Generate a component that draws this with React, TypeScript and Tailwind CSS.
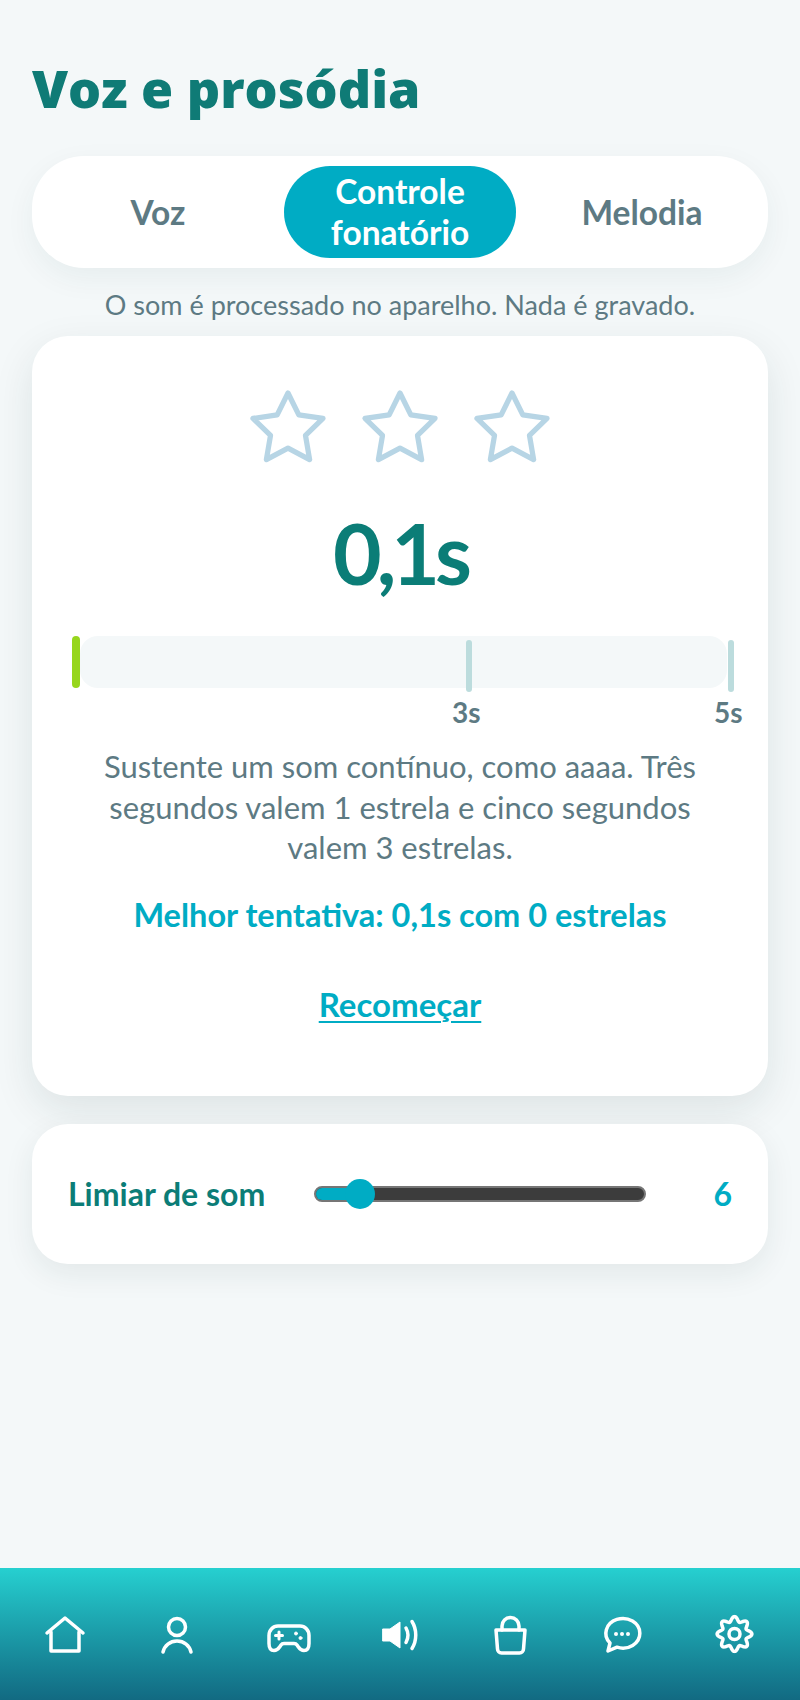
import React from 'react';

const tabs = ['Voz', 'Controle fonatório', 'Melodia'];

// wavy outline for the settings gear, 8 lobes
const gearPath = (() => {
  const pts: string[] = [];
  for (let i = 0; i < 160; i++) {
    const t = (i / 160) * Math.PI * 2;
    const r = 15 + 2.4 * Math.cos(8 * t);
    pts.push(`${(23.5 + r * Math.sin(t)).toFixed(2)} ${(24 - r * Math.cos(t)).toFixed(2)}`);
  }
  return `M${pts.join('L')}z`;
})();

function StarIcon() {
  return (
    <svg width="84" height="84" viewBox="0 0 24 24" fill="none" stroke="#b7d5e5" strokeWidth="1.5" strokeLinejoin="round">
      <path d="M12 2l3.09 6.26L22 9.27l-5 4.87 1.18 6.88L12 17.77l-6.18 3.25L7 14.14 2 9.27l6.91-1.01L12 2z" />
    </svg>
  );
}

function NavIcon({ children }: { children: React.ReactNode }) {
  return (
    <svg width="48" height="48" viewBox="0 0 48 48" fill="none" stroke="white" strokeWidth="3.5" strokeLinecap="round" strokeLinejoin="round">
      {children}
    </svg>
  );
}

export default function App() {
  return (
    <div className="flex min-h-[1700px] flex-col bg-[#f4f8f9] font-['Lato',sans-serif]">
      <div className="flex flex-col px-8 pt-[58px]">
        <h1 className="font-['Open_Sans',sans-serif] text-[52px] leading-[60px] font-extrabold text-[#0f7b76]">Voz e prosódia</h1>

        <div className="mt-[38px] grid h-[112px] grid-cols-3 gap-[10px] rounded-[52px] bg-white p-[10px] shadow-[0_10px_30px_rgba(0,60,70,0.06)]">
          {tabs.map((tab) => (
            <div
              key={tab}
              className={
                tab === 'Controle fonatório'
                  ? 'flex items-center justify-center rounded-[46px] bg-[#00acc4] px-6 text-center text-[33.5px] leading-[41px] font-bold text-white'
                  : 'flex items-center justify-center text-center text-[33.5px] leading-[41px] font-bold text-[#5d7a83]'
              }
            >
              {tab}
            </div>
          ))}
        </div>

        <p className="mt-5 text-center text-[27px] leading-[34px] text-[#5d7a83]">O som é processado no aparelho. Nada é gravado.</p>

        <div className="mt-[14px] flex h-[760px] flex-col items-center rounded-[36px] bg-white px-9 pt-[50px] shadow-[0_14px_40px_rgba(20,50,50,0.1)]">
          <div className="flex gap-7">
            <StarIcon />
            <StarIcon />
            <StarIcon />
          </div>

          <div className="mt-[33px] text-[84px] leading-[100px] font-bold tracking-[-5px] text-[#0b7d77]">0,1s</div>

          <div className="relative mt-[33px] ml-[12px] h-[52px] w-[647px] self-start rounded-[18px] bg-[#f4f8f9]">
            <div className="absolute top-0 -left-2 h-[52px] w-2 rounded-full bg-[#97d61d]" />
            <div className="absolute top-1 left-[386px] h-[52px] w-[6px] rounded-full bg-[#bcdcdd]" />
            <div className="absolute top-1 left-[648px] h-[52px] w-[6px] rounded-full bg-[#bcdcdd]" />
            <span className="absolute top-[60px] left-[372px] text-[28px] leading-[32px] font-bold text-[#5d7a83]">3s</span>
            <span className="absolute top-[60px] left-[634px] text-[28px] leading-[32px] font-bold text-[#5d7a83]">5s</span>
          </div>

          <p className="mt-[58px] max-w-[620px] text-center text-[31px] leading-[40.5px] text-[#5d7a83]">
            Sustente um som contínuo, como aaaa. Três segundos valem 1 estrela e cinco segundos valem 3 estrelas.
          </p>

          <p className="mt-[27px] text-center text-[32.5px] leading-[40px] font-bold text-[#00acc4]">Melhor tentativa: 0,1s com 0 estrelas</p>

          <a className="mt-[49px] text-[33px] leading-[40px] font-bold text-[#00acc4] underline decoration-2 underline-offset-4">Recomeçar</a>
        </div>

        <div className="mt-7 flex h-[140px] items-center rounded-[36px] bg-white pr-9 pl-9 shadow-[0_10px_30px_rgba(20,50,50,0.08)]">
          <span className="w-[246px] text-[32px] font-bold text-[#0b7d77]">Limiar de som</span>
          <div className="relative h-4 w-[332px] rounded-full border-2 border-[#767676] bg-[#3c3c3c]">
            <div className="absolute top-0 left-0 h-full w-[46px] rounded-l-full bg-[#00acc4]" />
            <div className="absolute top-[-9px] left-[29px] h-[30px] w-[30px] rounded-full bg-[#00acc4]" />
          </div>
          <span className="ml-auto text-[32px] font-bold text-[#00acc4]">6</span>
        </div>
      </div>

      <nav className="mt-auto flex h-[132px] items-start justify-between bg-gradient-to-b from-[#26d0d0] to-[#126a82] px-[41px] pt-[42px]">
        <NavIcon>
          <path d="M6 23L24 8l18 15" />
          <path d="M10 22v19h28V22" />
        </NavIcon>
        <NavIcon>
          <circle cx="24" cy="17" r="8.500" />
          <path d="M10 42c1.500-6.500 7-11 14-11s12.500 4.500 14 11" />
        </NavIcon>
        <NavIcon>
          <path d="M14 16h22c5 0 9 4 9 9.500v8c0 5-2 7-5 7-2.500 0-4-1-6-4l-1-1.500c-.8-1.200-1.500-1.500-3-1.500H20c-1.500 0-2.200.3-3 1.500l-1 1.500c-2 3-3.500 4-6 4-3 0-5-2-5-7v-8c0-5.500 4-9.500 9-9.500z" />
          <path d="M15 22v7M11.500 25.500h7" strokeWidth="3" />
          <circle cx="32" cy="23.500" r="1.500" fill="white" strokeWidth="1" />
          <circle cx="36.500" cy="28" r="1.500" fill="white" strokeWidth="1" />
        </NavIcon>
        <NavIcon>
          <path d="M7 19h7l10-7v26l-10-7H7z" fill="white" strokeWidth="1" />
          <path d="M30 18c2.500 4.500 2.500 10 0 14.500" />
          <path d="M36 11.500c5 8 5 19 0 27" />
        </NavIcon>
        <NavIcon>
          <path d="M14 20v-4a8.500 8.500 0 0 1 17 0v4" />
          <path d="M8 20h29l-1.500 19a4 4 0 0 1-4 4H13.500a4 4 0 0 1-4-4z" />
        </NavIcon>
        <NavIcon>
          <path d="M11 33A17 14.800 0 1 1 18 37.200L9 41z" />
          <circle cx="17" cy="24" r="2" fill="white" stroke="none" />
          <circle cx="23" cy="24" r="2" fill="white" stroke="none" />
          <circle cx="29" cy="24" r="2" fill="white" stroke="none" />
        </NavIcon>
        <NavIcon>
          <path d={gearPath} />
          <circle cx="23.500" cy="24" r="5.500" />
        </NavIcon>
      </nav>
    </div>
  );
}
